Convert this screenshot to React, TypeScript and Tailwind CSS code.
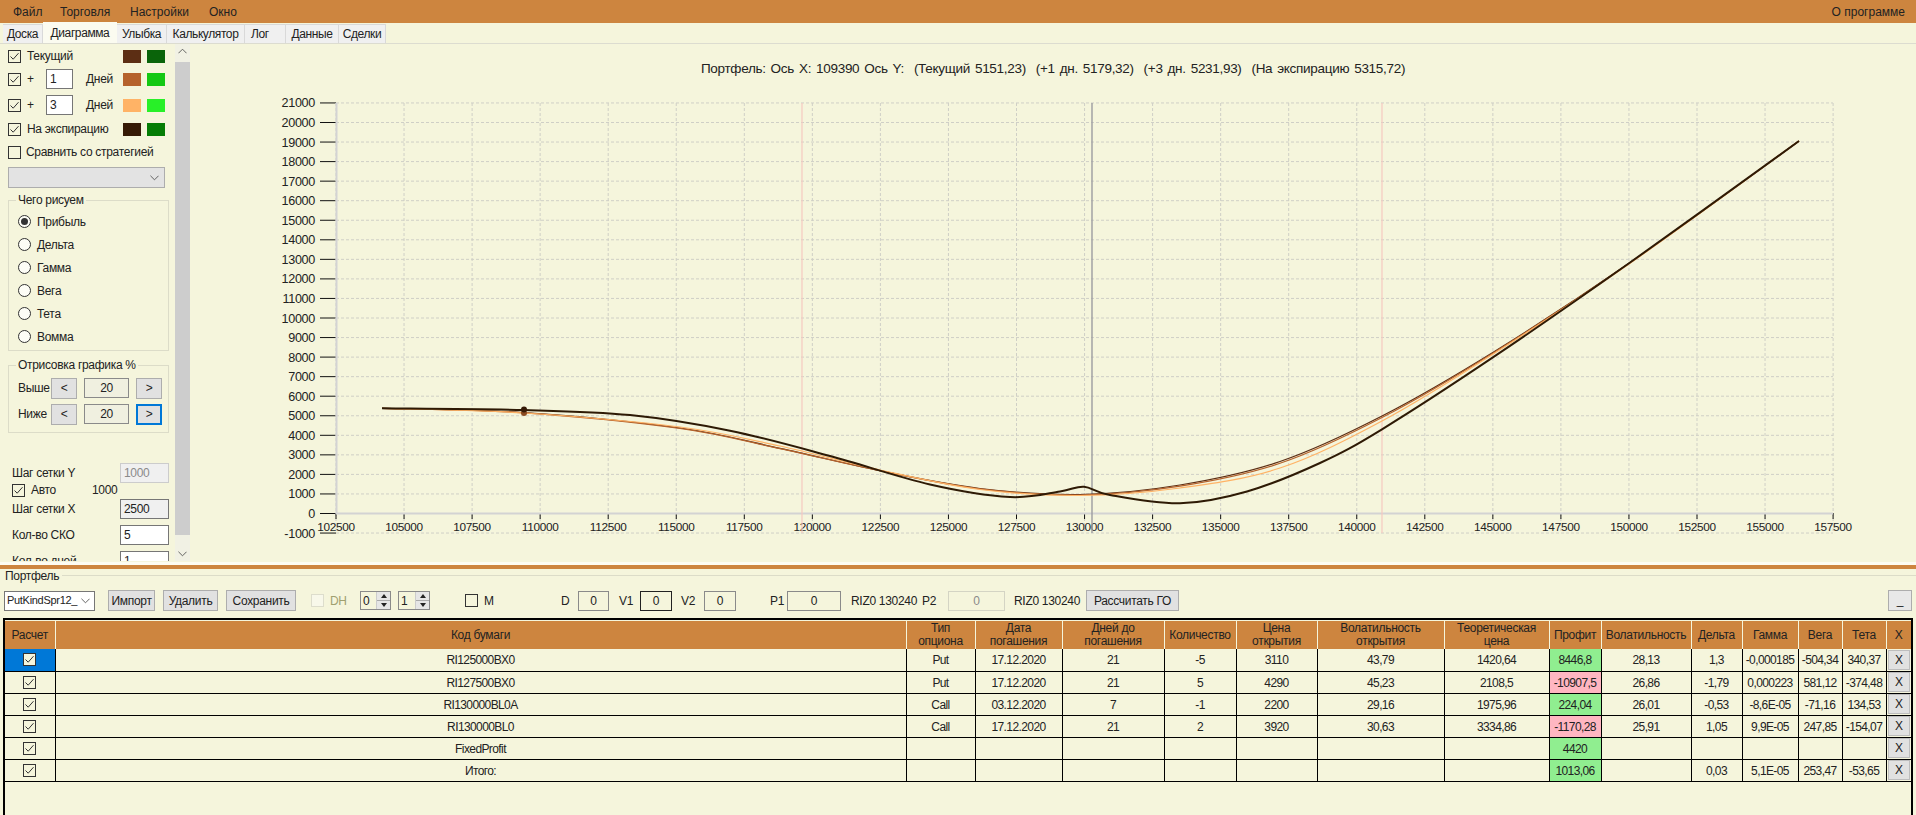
import React from "react";

type Pt = [number, number];

// px coordinates read off the reference
const expiry: Pt[] = [[382,408.3],[524,410],[630,415],[730,430.7],[830,456],[930,484.5],[1010,497],[1060,491.5],[1084,486.7],[1110,495],[1180,503.3],[1247,491.5],[1320,463],[1382,429.3],[1494,356.7],[1629,263.3],[1799,141]];
const current: Pt[] = [[382,408.3],[524,412.5],[680,428],[780,448.3],[880,470.7],[980,488.5],[1080,494.5],[1180,485],[1280,461.5],[1382,416],[1494,351.7],[1629,263.3],[1799,141]];
const plusOne: Pt[] = [[382,408.3],[524,412.8],[680,428.4],[780,448.6],[880,470.7],[980,488.8],[1080,495],[1180,486.2],[1280,463.3],[1382,417.5],[1494,352.4],[1629,263.5],[1799,141]];
const plusThree: Pt[] = [[382,408.3],[524,413],[680,427],[780,446],[880,470],[980,489.5],[1080,495.5],[1180,488],[1280,468],[1382,421],[1494,353.5],[1629,264],[1799,141]];

const smooth = (p: Pt[]) => {
  let d = `M${p[0][0]} ${p[0][1]}`;
  for (let i = 0; i < p.length - 1; i++) {
    const a = p[Math.max(i - 1, 0)], b = p[i], c = p[i + 1], e = p[Math.min(i + 2, p.length - 1)];
    d += ` C${b[0] + (c[0] - a[0]) / 6} ${b[1] + (c[1] - a[1]) / 6} ${c[0] - (e[0] - b[0]) / 6} ${c[1] - (e[1] - b[1]) / 6} ${c[0]} ${c[1]}`;
  }
  return d;
};

const yVals = Array.from({ length: 23 }, (_, i) => 21000 - i * 1000);
const xVals = Array.from({ length: 23 }, (_, i) => 102500 + i * 2500);
const yOf = (v: number) => 513.5 - (v / 1000) * 19.55;
const xOf = (v: number) => 336 + ((v - 102500) / 2500) * 68.05;

const Chart = () => (
  <svg viewBox="190 44 1726 517" className="w-[1726px] h-[517px] block">
    <text x="1053" y="73" textAnchor="middle" fontSize="13.5" wordSpacing="1.5" fill="#222" xmlSpace="preserve">
      Портфель: Ось X: 109390 Ось Y:  (Текущий 5151,23)  (+1 дн. 5179,32)  (+3 дн. 5231,93)  (На экспирацию 5315,72)
    </text>
    {yVals.map((v) => (
      <g key={v}>
        <line x1="336" x2="1833" y1={yOf(v)} y2={yOf(v)} stroke="#cfcfc6" strokeDasharray="3 2" />
        <line x1="320" x2="336" y1={yOf(v)} y2={yOf(v)} stroke="#111" />
        <text x="315" y={yOf(v) + 4.5} textAnchor="end" fontSize="12.6" fill="#222">{v}</text>
      </g>
    ))}
    {xVals.map((v) => (
      <g key={v}>
        <line x1={xOf(v)} x2={xOf(v)} y1="103" y2="533" stroke="#cfcfc6" strokeDasharray="3 2" />
        <line x1={xOf(v)} x2={xOf(v)} y1="513" y2="519" stroke="#111" />
        <text x={xOf(v)} y="531" textAnchor="middle" fontSize="11.8" fill="#222">{v}</text>
      </g>
    ))}
    <line x1="336.5" x2="336.5" y1="103" y2="514" stroke="#d3d3d3" strokeWidth="2" />
    <line x1="336" x2="1833" y1="513.5" y2="513.5" stroke="#d3d3d3" strokeWidth="2" />
    <line x1="802" x2="802" y1="103" y2="533" stroke="#f6c9c0" strokeWidth="1.2" />
    <line x1="1382" x2="1382" y1="103" y2="533" stroke="#f6c9c0" strokeWidth="1.2" />
    <line x1="1092" x2="1092" y1="103" y2="533" stroke="#9c9ca0" strokeWidth="1.4" />
    <path d={smooth(current)} fill="none" stroke="#5c2e14" strokeWidth="1.2" />
    <path d={smooth(plusOne)} fill="none" stroke="#b5622c" strokeWidth="1.2" />
    <path d={smooth(plusThree)} fill="none" stroke="#ffb366" strokeWidth="1.2" />
    <path d={smooth(expiry)} fill="none" stroke="#2e1a05" strokeWidth="2" />
    <circle cx="524" cy="413" r="3" fill="#8a4a20" />
    <circle cx="524" cy="409.5" r="3" fill="#361a06" />
  </svg>
);

const Check = ({ on = true, disabled = false }: { on?: boolean; disabled?: boolean }) => (
  <span className={`w-[13px] h-[13px] shrink-0 border flex items-center justify-center ${disabled ? "border-[#ddddcc] bg-[#f8f8ea]" : "border-[#333333]"}`}>
    {on && (
      <svg viewBox="0 0 11 11" className="w-[11px] h-[11px]">
        <path d="M1.5 5.5 L4.2 8.2 L9.5 2.2" fill="none" stroke="#333" strokeWidth="1" />
      </svg>
    )}
  </span>
);

const Radio = ({ label, on = false }: { label: string; on?: boolean }) => (
  <div className="h-[23px] flex items-center pl-[9px]">
    <span className="w-[13px] h-[13px] rounded-full border border-[#333333] bg-[#fdfdf6] flex items-center justify-center">
      {on && <span className="w-[7px] h-[7px] rounded-full bg-[#333333]" />}
    </span>
    <span className="ml-[6px]">{label}</span>
  </div>
);

const Swatches = ({ a, b }: { a: string; b: string }) => (
  <div className="flex gap-[6px] ml-auto mr-[10px]">
    <span className={`w-[18px] h-[13px] ${a}`} />
    <span className={`w-[18px] h-[13px] ${b}`} />
  </div>
);

const SideButton = ({ label, focus = false }: { label: string; focus?: boolean }) => (
  <div className={`w-[26px] h-[21px] flex items-center justify-center bg-[#e1e1e1] ${focus ? "border-2 border-[#0078d7]" : "border border-[#adadad]"}`}>{label}</div>
);

const Box = ({ className, children }: { className: string; children?: React.ReactNode }) => (
  <div className={`h-[20px] border flex items-center shrink-0 ${className}`}>{children}</div>
);

const Spinner = ({ value, width }: { value: string; width: string }) => (
  <div className={`${width} h-[19px] border border-[#8a8a8a] flex items-center justify-between bg-[#f5f5dc] ml-[7px] first:ml-0`}>
    <span className="pl-[2px]">{value}</span>
    <span className="w-[14px] h-full flex flex-col border-l border-[#cccccc]">
      <span className="flex-1 bg-[#e6e6e6] border-b border-[#aaaaaa] flex items-center justify-center">
        <span className="w-0 h-0 border-x-[3px] border-x-transparent border-b-[4px] border-b-[#222222]" />
      </span>
      <span className="flex-1 bg-[#e6e6e6] flex items-center justify-center">
        <span className="w-0 h-0 border-x-[3px] border-x-transparent border-t-[4px] border-t-[#222222]" />
      </span>
    </span>
  </div>
);

const Chevron = () => (
  <svg viewBox="0 0 10 6" className="w-[9px] h-[6px] shrink-0">
    <path d="M0.5 0.5 L5 5 L9.5 0.5" fill="none" stroke="#555" />
  </svg>
);

const SidePanel = () => (
  <div className="w-[175px] h-[517px] overflow-hidden shrink-0">
    <div className="h-[14px] mt-[5px] flex items-center pl-[8px]">
      <Check />
      <span className="ml-[6px]">Текущий</span>
      <Swatches a="bg-[#5c2e14]" b="bg-[#0a640a]" />
    </div>
    <div className="h-[20px] mt-[6px] flex items-center pl-[8px]">
      <Check />
      <span className="ml-[6px] w-[19px]">+</span>
      <Box className="w-[27px] border-[#767676] bg-white pl-[3px]">1</Box>
      <span className="ml-[13px]">Дней</span>
      <Swatches a="bg-[#b5622c]" b="bg-[#14c814]" />
    </div>
    <div className="h-[20px] mt-[6px] flex items-center pl-[8px]">
      <Check />
      <span className="ml-[6px] w-[19px]">+</span>
      <Box className="w-[27px] border-[#767676] bg-white pl-[3px]">3</Box>
      <span className="ml-[13px]">Дней</span>
      <Swatches a="bg-[#ffb366]" b="bg-[#28f028]" />
    </div>
    <div className="h-[14px] mt-[7px] flex items-center pl-[8px]">
      <Check />
      <span className="ml-[6px]">На экспирацию</span>
      <Swatches a="bg-[#361a06]" b="bg-[#057d05]" />
    </div>
    <div className="h-[14px] mt-[9px] flex items-center pl-[8px]">
      <Check on={false} />
      <span className="ml-[5px]">Сравнить со стратегией</span>
    </div>
    <div className="ml-[8px] mt-[8px] w-[157px] h-[21px] bg-[#e3e3e3] border border-[#adadad] flex items-center justify-end pr-[5px]">
      <Chevron />
    </div>
    <div className="relative ml-[8px] mt-[12px] w-[161px] h-[151px] border border-[#dcdcc8] pt-[9px]">
      <span className="absolute -top-[7px] left-[7px] px-[2px] bg-[#f5f5dc]">Чего рисуем</span>
      <Radio label="Прибыль" on />
      <Radio label="Дельта" />
      <Radio label="Гамма" />
      <Radio label="Вега" />
      <Radio label="Тета" />
      <Radio label="Вомма" />
    </div>
    <div className="relative ml-[8px] mt-[14px] w-[161px] h-[68px] border border-[#dcdcc8] pt-[11px] pl-[9px]">
      <span className="absolute -top-[7px] left-[7px] px-[2px] bg-[#f5f5dc]">Отрисовка графика %</span>
      <div className="flex items-center h-[22px]">
        <span className="w-[33px]">Выше</span>
        <SideButton label="<" />
        <Box className="ml-[7px] w-[45px] border-[#8a8a8a] bg-[#f0f0e0] justify-center">20</Box>
        <div className="ml-[7px]"><SideButton label=">" /></div>
      </div>
      <div className="flex items-center h-[22px] mt-[4px]">
        <span className="w-[33px]">Ниже</span>
        <SideButton label="<" />
        <Box className="ml-[7px] w-[45px] border-[#8a8a8a] bg-[#f0f0e0] justify-center">20</Box>
        <div className="ml-[7px]"><SideButton label=">" focus /></div>
      </div>
    </div>
    <div className="mt-[30px] h-[20px] flex items-center pl-[12px]">
      <span>Шаг сетки Y</span>
      <Box className="ml-auto mr-[6px] w-[49px] border-[#cccccc] bg-[#f0f0f0] text-[#8a8a8a] pl-[3px]">1000</Box>
    </div>
    <div className="h-[14px] flex items-center pl-[12px]">
      <Check />
      <span className="ml-[6px]">Авто</span>
      <span className="ml-[36px]">1000</span>
    </div>
    <div className="mt-[2px] h-[20px] flex items-center pl-[12px]">
      <span>Шаг сетки X</span>
      <Box className="ml-auto mr-[6px] w-[49px] border-[#767676] bg-[#f0f0f0] pl-[3px]">2500</Box>
    </div>
    <div className="mt-[6px] h-[20px] flex items-center pl-[12px]">
      <span>Кол-во СКО</span>
      <Box className="ml-auto mr-[6px] w-[49px] border-[#767676] bg-white pl-[3px]">5</Box>
    </div>
    <div className="mt-[6px] h-[20px] flex items-center pl-[12px]">
      <span>Кол-во дней</span>
      <Box className="ml-auto mr-[6px] w-[49px] border-[#767676] bg-white pl-[3px]">1</Box>
    </div>
  </div>
);

const Scroller = () => (
  <div className="w-[15px] h-[517px] shrink-0 flex flex-col bg-[#f1f1e4]">
    <div className="h-[18px] flex items-end justify-center pb-[4px] rotate-180">
      <Chevron />
    </div>
    <div className="h-[473px] bg-[#cdcdcd]" />
    <div className="flex-1 flex items-end justify-center pb-[4px]">
      <Chevron />
    </div>
  </div>
);

const tabs = [
  { t: "Доска", w: "w-[40px]", align: "justify-center" },
  { t: "Диаграмма", w: "w-[74px]", align: "justify-center", active: true },
  { t: "Улыбка", w: "w-[50px]", align: "justify-center" },
  { t: "Калькулятор", w: "w-[78px]", align: "justify-center" },
  { t: "Лог", w: "w-[41px]", align: "justify-start pl-[6px]" },
  { t: "Данные", w: "w-[53px]", align: "justify-center" },
  { t: "Сделки", w: "w-[47px]", align: "justify-center" },
];

const BtnBar = ({ w, label, ml }: { w: string; label: string; ml: string }) => (
  <div className={`${w} ${ml} h-[21px] bg-[#e1e1e1] border border-[#adadad] flex items-center justify-center shrink-0`}>{label}</div>
);

const columns = [
  { w: "w-[50px]", h: ["Расчет"] },
  { w: "w-[851px]", h: ["Код бумаги"] },
  { w: "w-[69px]", h: ["Тип", "опциона"] },
  { w: "w-[87px]", h: ["Дата", "погашения"] },
  { w: "w-[102px]", h: ["Дней до", "погашения"] },
  { w: "w-[72px]", h: ["Количество"] },
  { w: "w-[81px]", h: ["Цена", "открытия"] },
  { w: "w-[127px]", h: ["Волатильность", "открытия"] },
  { w: "w-[105px]", h: ["Теоретическая", "цена"] },
  { w: "w-[52px]", h: ["Профит"] },
  { w: "w-[90px]", h: ["Волатильность"] },
  { w: "w-[51px]", h: ["Дельта"] },
  { w: "w-[56px]", h: ["Гамма"] },
  { w: "w-[44px]", h: ["Вега"] },
  { w: "w-[44px]", h: ["Тета"] },
  { w: "w-[25px]", h: ["X"] },
];

const rows = [
  ["RI125000BX0", "Put", "17.12.2020", "21", "-5", "3110", "43,79", "1420,64", "8446,8", "28,13", "1,3", "-0,000185", "-504,34", "340,37"],
  ["RI127500BX0", "Put", "17.12.2020", "21", "5", "4290", "45,23", "2108,5", "-10907,5", "26,86", "-1,79", "0,000223", "581,12", "-374,48"],
  ["RI130000BL0A", "Call", "03.12.2020", "7", "-1", "2200", "29,16", "1975,96", "224,04", "26,01", "-0,53", "-8,6E-05", "-71,16", "134,53"],
  ["RI130000BL0", "Call", "17.12.2020", "21", "2", "3920", "30,63", "3334,86", "-1170,28", "25,91", "1,05", "9,9E-05", "247,85", "-154,07"],
  ["FixedProfit", "", "", "", "", "", "", "", "4420", "", "", "", "", ""],
  ["Итого:", "", "", "", "", "", "", "", "1013,06", "", "0,03", "5,1E-05", "253,47", "-53,65"],
];

const Grid = () => (
  <div className="mx-[3px] h-[197px] border-x-2 border-t-2 border-black pt-[1px] overflow-hidden">
    <table className="table-fixed border-collapse w-[1906px] text-[12px] tracking-[-0.6px]">
      <colgroup>
        {columns.map((c, i) => <col key={i} className={c.w} />)}
      </colgroup>
      <thead>
        <tr className="h-[28px] bg-[#cd853f]">
          {columns.map((c, i) => (
            <th key={i} className="font-normal text-[12px] tracking-[-0.3px] leading-[13px] border-r border-[#f5f5dc] p-0 whitespace-nowrap">
              {c.h.map((l) => <div key={l}>{l}</div>)}
            </th>
          ))}
        </tr>
      </thead>
      <tbody>
        {rows.map((r, i) => (
          <tr key={i} className="h-[22px] border-b border-black">
            <td className={`p-0 border-r border-black ${i === 0 ? "bg-[#0078d7]" : ""}`}>
              <div className={`mx-auto w-[13px] ${i === 0 ? "bg-[#f5f5dc]" : ""}`}><Check /></div>
            </td>
            {r.map((v, j) => {
              const profit = j === 8;
              const tone = !profit ? "" : v.startsWith("-") ? "bg-[#ffb6c1]" : "bg-[#90ee90]";
              return (
                <td key={j} className={`p-0 pt-[1px] text-center border-r border-black whitespace-nowrap ${tone}`}>{v}</td>
              );
            })}
            <td className="p-0 px-[1px]">
              <div className="h-[20px] bg-[#e1e1e1] border border-[#bdbdbd] flex items-center justify-center">X</div>
            </td>
          </tr>
        ))}
      </tbody>
    </table>
  </div>
);

export default function App() {
  return (
    <div className="w-[1916px] h-[815px] overflow-hidden bg-[#f5f5dc] text-[#222222] text-[12px] tracking-[-0.3px] leading-none font-['Liberation_Sans',Arial,sans-serif]">
      {/* MENU */}
      <div className="h-[23px] bg-[#cd853f] flex items-center text-[12px] tracking-normal">
        <span className="ml-[13px] w-[47px]">Файл</span>
        <span className="w-[70px]">Торговля</span>
        <span className="w-[79px]">Настройки</span>
        <span>Окно</span>
        <span className="ml-auto mr-[11px]">О программе</span>
      </div>
      {/* TABS */}
      <div className="h-[21px] pl-[3px] flex items-end border-b border-[#dcdcd0] text-[12px] tracking-[-0.4px]">
        {tabs.map((t) => (
          <div
            key={t.t}
            className={`${t.w} ${t.align} flex items-center ${t.active ? "h-[21px] bg-[#fbfbf0]" : "h-[19px] bg-[#f0f0f0] border-r border-t border-[#d9d9d9]"}`}
          >
            {t.t}
          </div>
        ))}
      </div>
      {/* DIAGRAM */}
      <div className="flex h-[517px]">
        <SidePanel />
        <Scroller />
        <Chart />
      </div>
      {/* SPLITTER */}
      <div className="h-[1px]" />
      <div className="h-[3px] bg-[#fdfcf2]" />
      <div className="h-[4px] bg-[#cd853f]" />
      {/* PORTFOLIO */}
      <div className="h-[14px] flex items-center pl-[5px]">
        <span>Портфель</span>
        <span className="ml-[3px] flex-1 h-[1px] bg-[#dcdcc8] -translate-y-[1px]" />
      </div>
      <div className="mt-[6px] h-[23px] flex items-center">
        <div className="ml-[4px] w-[91px] h-[20px] border border-[#767676] bg-white flex items-center justify-between pl-[2px] pr-[4px] shrink-0">
          <span className="text-[11px] whitespace-nowrap">PutKindSpr12_</span>
          <Chevron />
        </div>
        <BtnBar w="w-[47px]" ml="ml-[13px]" label="Импорт" />
        <BtnBar w="w-[55px]" ml="ml-[8px]" label="Удалить" />
        <BtnBar w="w-[70px]" ml="ml-[8px]" label="Сохранить" />
        <span className="ml-[15px]"><Check on={false} disabled /></span>
        <span className="ml-[6px] w-[18px] text-[#a0a070]">DH</span>
        <div className="ml-[12px] flex">
          <Spinner value="0" width="w-[31px]" />
          <Spinner value="1" width="w-[32px]" />
        </div>
        <span className="ml-[35px]"><Check on={false} /></span>
        <span className="ml-[6px] w-[10px]">M</span>
        <span className="ml-[67px] w-[9px]">D</span>
        <Box className="ml-[8px] w-[31px] border-[#8a8a8a] justify-center">0</Box>
        <span className="ml-[10px] w-[21px]">V1</span>
        <Box className="w-[32px] border-[#222222] justify-center">0</Box>
        <span className="ml-[9px] w-[23px]">V2</span>
        <Box className="w-[32px] border-[#8a8a8a] justify-center">0</Box>
        <span className="ml-[34px] w-[17px]">P1</span>
        <Box className="w-[54px] border-[#8a8a8a] justify-center">0</Box>
        <span className="ml-[10px] w-[71px] whitespace-nowrap">RIZ0 130240</span>
        <span className="w-[26px]">P2</span>
        <Box className="w-[57px] border-[#d4d4c4] text-[#8a8a8a] justify-center">0</Box>
        <span className="ml-[9px] w-[72px] whitespace-nowrap">RIZ0 130240</span>
        <BtnBar w="w-[93px]" ml="ml-0" label="Рассчитать ГО" />
        <div className="ml-auto mr-[4px] w-[24px] h-[21px] bg-[#e8e8e8] border border-[#adadad] flex items-end justify-center pb-[4px]">_</div>
      </div>
      <div className="mt-[6px]">
        <Grid />
      </div>
    </div>
  );
}
